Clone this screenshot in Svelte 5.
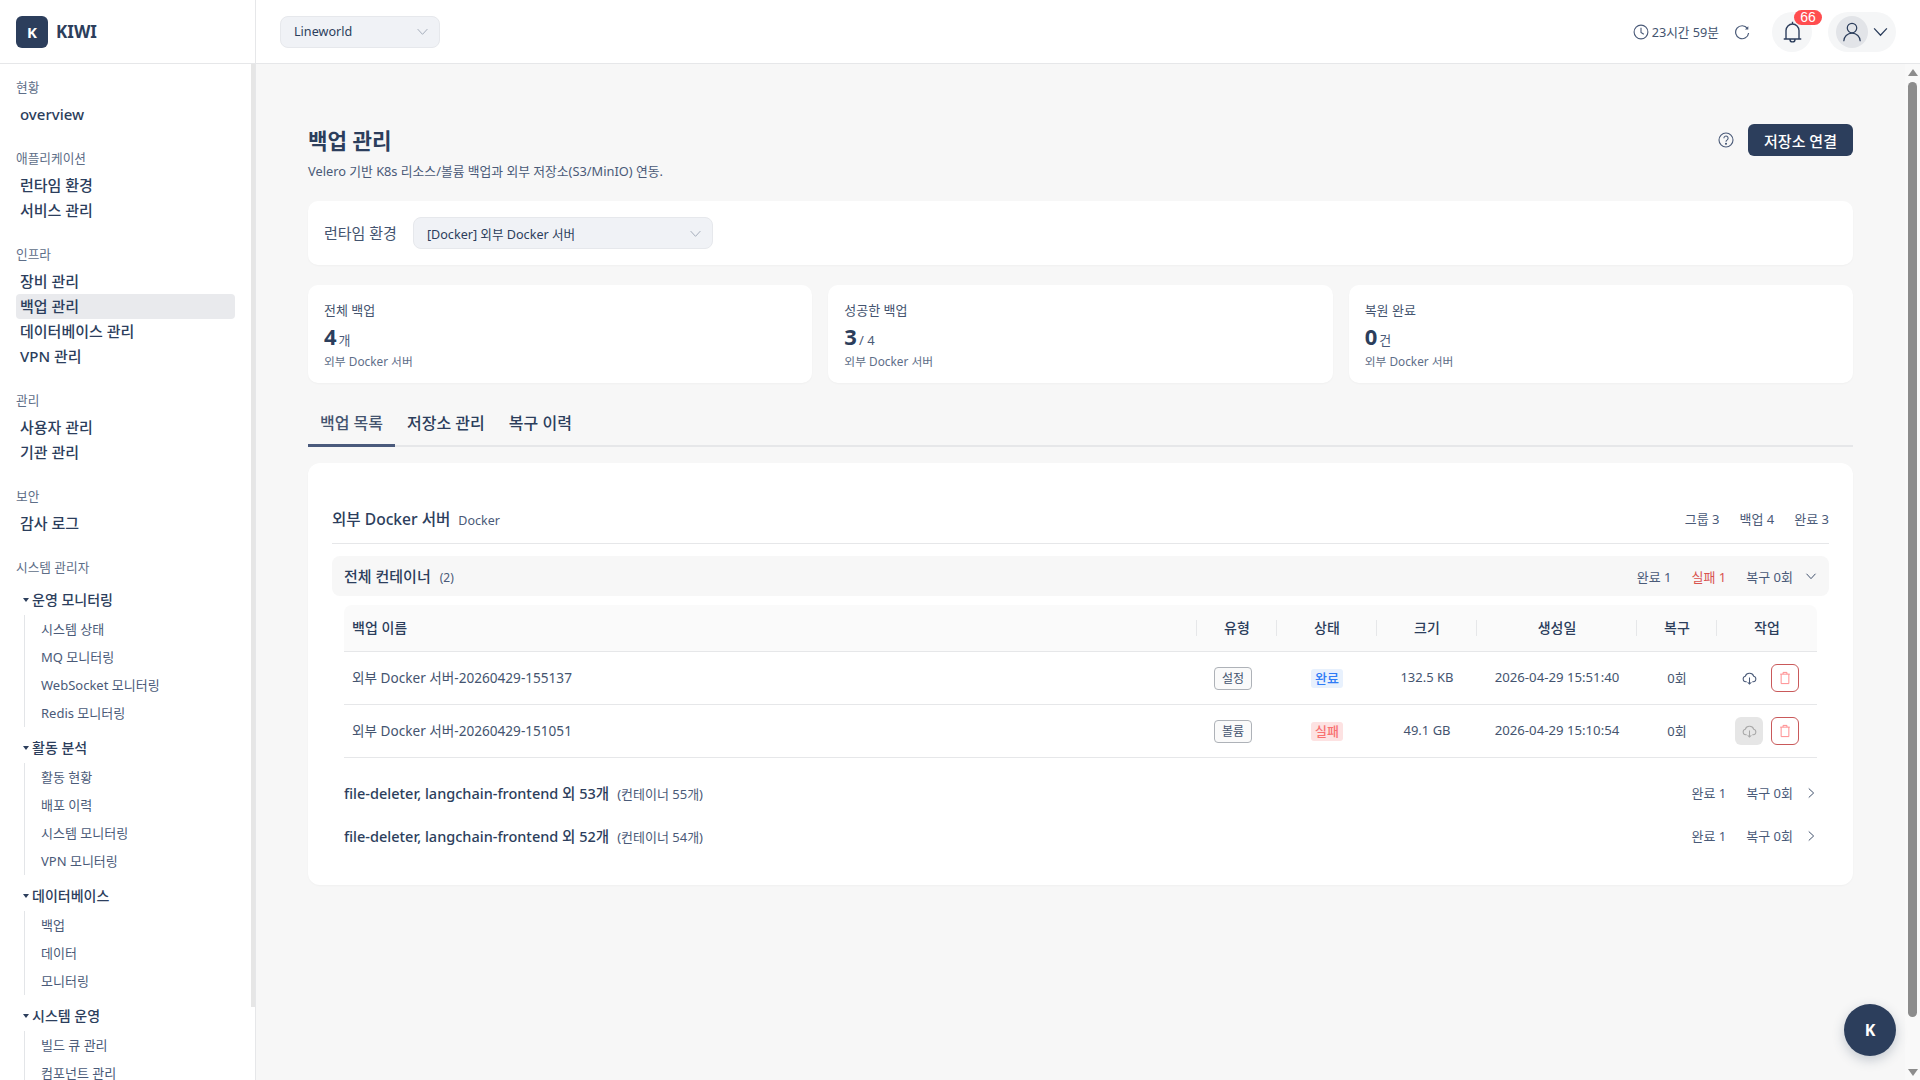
<script>
  const sections = [
    { label: '현황', items: ['overview'] },
    { label: '애플리케이션', items: ['런타임 환경', '서비스 관리'] },
    { label: '인프라', items: ['장비 관리', '백업 관리', '데이터베이스 관리', 'VPN 관리'] },
    { label: '관리', items: ['사용자 관리', '기관 관리'] },
    { label: '보안', items: ['감사 로그'] }
  ];
  const groups = [
    { title: '운영 모니터링', items: ['시스템 상태', 'MQ 모니터링', 'WebSocket 모니터링', 'Redis 모니터링'] },
    { title: '활동 분석', items: ['활동 현황', '배포 이력', '시스템 모니터링', 'VPN 모니터링'] },
    { title: '데이터베이스', items: ['백업', '데이터', '모니터링'] },
    { title: '시스템 운영', items: ['빌드 큐 관리', '컴포넌트 관리'] }
  ];
  const stats = [
    { label: '전체 백업', value: '4', unit: '개' },
    { label: '성공한 백업', value: '3', unit: '/ 4' },
    { label: '복원 완료', value: '0', unit: '건' }
  ];
  const rows = [
    { name: '외부 Docker 서버-20260429-155137', type: '설정', status: '완료', ok: true, size: '132.5 KB', date: '2026-04-29 15:51:40' },
    { name: '외부 Docker 서버-20260429-151051', type: '볼륨', status: '실패', ok: false, size: '49.1 GB', date: '2026-04-29 15:10:54' }
  ];
  const others = [
    { title: 'file-deleter, langchain-frontend 외 53개', count: '(컨테이너 55개)' },
    { title: 'file-deleter, langchain-frontend 외 52개', count: '(컨테이너 54개)' }
  ];
</script>

{#snippet chevron(cls)}
  <svg class={cls} viewBox="0 0 16 16" fill="none" stroke="currentColor" stroke-width="1.2"><path d="M2 5 8 11.5 14 5" /></svg>
{/snippet}
{#snippet cloud()}
  <svg class="ic-cloud" viewBox="0 0 16 16" fill="none" stroke="currentColor" stroke-width="1.1"><path d="M5 11.5H4a3 3 0 0 1-.5-5.9A4.6 4.6 0 0 1 8 2.5a4.6 4.6 0 0 1 4.5 3.1 3 3 0 0 1-.5 5.9h-1" /><path d="M8 7v7M6 12l2 2 2-2" /></svg>
{/snippet}
{#snippet trash()}
  <svg class="ic-trash" viewBox="0 0 16 16" fill="none" stroke="currentColor" stroke-width="1.1"><path d="M2.5 3.6h11M5.8 3.6V1.6h4.4v2M3.6 3.6v10.8h8.8V3.6" /></svg>
{/snippet}

<div class="app">
  <header class="topbar">
    <div class="brand">
      <span class="logo">K</span>
      <span class="brand-name">KIWI</span>
    </div>
    <div class="top-main">
      <div class="select org">
        <span>Lineworld</span>
        {@render chevron('chev-sel')}
      </div>
      <div class="top-right">
        <svg class="ic16 slate" viewBox="0 0 16 16" fill="none" stroke="currentColor" stroke-width="1.1"><circle cx="8" cy="8" r="6.9" /><path d="M8 3.8V8.4l2.8 1.8" /></svg>
        <span class="timer">23시간 59분</span>
        <svg class="ic16 slate refresh" viewBox="0 0 16 16" fill="none" stroke="currentColor" stroke-width="1.2"><path d="M13.4 4.4A6.5 6.5 0 1 0 14.6 9" /><path d="M14.3 2.2v3.4h-3.4z" fill="currentColor" stroke="none" /></svg>
        <div class="bell">
          <svg class="ic-bell" viewBox="0 0 20 20" fill="none" stroke="currentColor" stroke-width="1.1"><path d="M3 16h14M4.8 16V9.2a5.2 5.2 0 0 1 10.4 0V16M10 4V2.2M8 16.3a2 2 0 0 0 4 0" /></svg>
          <span class="badge">66</span>
        </div>
        <div class="user">
          <span class="avatar">
            <svg viewBox="0 0 20 20" fill="none" stroke="currentColor" stroke-width="1.1"><circle cx="10" cy="6.4" r="4.3" /><path d="M2.5 18.5a7.5 7.5 0 0 1 15 0" /></svg>
          </span>
          {@render chevron('chev-user')}
        </div>
      </div>
    </div>
  </header>

  <div class="body">
    <aside class="sidebar">
      <nav class="side-scroll">
        {#each sections as s}
          <div class="sec">
            <div class="sec-label">{s.label}</div>
            {#each s.items as item}
              <div class="nav-item" class:active={item === '백업 관리'}>{item}</div>
            {/each}
          </div>
        {/each}
        <div class="sec-label sys">시스템 관리자</div>
        {#each groups as g}
          <div class="grp">
            <div class="grp-title"><span class="tri"></span>{g.title}</div>
            <div class="grp-items">
              {#each g.items as item}
                <div class="grp-item">{item}</div>
              {/each}
            </div>
          </div>
        {/each}
      </nav>
      <div class="side-thumb"></div>
    </aside>

    <main class="main">
      <div class="content">
        <div class="page-head">
          <div>
            <h1>백업 관리</h1>
            <p>Velero 기반 K8s 리소스/볼륨 백업과 외부 저장소(S3/MinIO) 연동.</p>
          </div>
          <div class="head-actions">
            <svg class="ic16 slate" viewBox="0 0 16 16" fill="none" stroke="currentColor" stroke-width="1.1"><circle cx="8" cy="8" r="7" /><path d="M5.9 6.2a2.1 2.1 0 1 1 3.3 1.7c-.8.5-1.2 1-1.2 1.8" /><circle cx="8" cy="11.8" r=".5" fill="currentColor" /></svg>
            <button class="primary">저장소 연결</button>
          </div>
        </div>

        <section class="card runtime">
          <span class="rt-label">런타임 환경</span>
          <div class="select rt">
            <span>[Docker] 외부 Docker 서버</span>
            {@render chevron('chev-sel')}
          </div>
        </section>

        <div class="stats">
          {#each stats as st}
            <section class="card stat">
              <div class="st-label">{st.label}</div>
              <div class="st-value"><b>{st.value}</b><span>{st.unit}</span></div>
              <div class="st-sub">외부 Docker 서버</div>
            </section>
          {/each}
        </div>

        <div class="tabs">
          <div class="tab active">백업 목록</div>
          <div class="tab">저장소 관리</div>
          <div class="tab">복구 이력</div>
        </div>

        <section class="card panel">
          <div class="srv-head">
            <div class="srv-title"><strong>외부 Docker 서버</strong><span>Docker</span></div>
            <div class="meta wide"><span>그룹 3</span><span>백업 4</span><span>완료 3</span></div>
          </div>

          <div class="ctr-row open">
            <div class="ctr-title"><strong>전체 컨테이너</strong><span>(2)</span></div>
            <div class="meta">
              <span>완료 1</span><span class="fail">실패 1</span><span>복구 0회</span>
              {@render chevron('chev-row')}
            </div>
          </div>

          <table>
            <colgroup>
              <col /><col class="c80" /><col class="c100" /><col class="c100" /><col class="c160" /><col class="c80" /><col class="c100" />
            </colgroup>
            <thead>
              <tr>
                <th class="left">백업 이름</th><th>유형</th><th>상태</th><th>크기</th><th>생성일</th><th>복구</th><th>작업</th>
              </tr>
            </thead>
            <tbody>
              {#each rows as r}
                <tr>
                  <td class="left name txt">{r.name}</td>
                  <td><span class="tag">{r.type}</span></td>
                  <td><span class="status" class:ok={r.ok} class:bad={!r.ok}>{r.status}</span></td>
                  <td class="txt">{r.size}</td>
                  <td class="date txt">{r.date}</td>
                  <td class="txt">0회</td>
                  <td>
                    <div class="acts">
                      <span class="act cloud" class:disabled={!r.ok}>{@render cloud()}</span>
                      <span class="act del">{@render trash()}</span>
                    </div>
                  </td>
                </tr>
              {/each}
            </tbody>
          </table>

          <div class="others">
            {#each others as o}
              <div class="ctr-row">
                <div class="ctr-title"><strong class="med">{o.title}</strong><span class="small">{o.count}</span></div>
                <div class="meta">
                  <span>완료 1</span><span>복구 0회</span>
                  {@render chevron('chev-row side')}
                </div>
              </div>
            {/each}
          </div>
        </section>
      </div>

      <div class="scrollbar">
        <span class="arrow up"></span>
        <span class="thumb"></span>
        <span class="arrow down"></span>
      </div>
      <div class="fab">K</div>
    </main>
  </div>
</div>

<style>
  :global(body) {
    margin: 0;
    background: #fff;
  }
  .app {
    width: 1920px;
    height: 1080px;
    display: flex;
    flex-direction: column;
    overflow: hidden;
    font-family: "Noto Sans", "Noto Sans CJK KR", sans-serif;
    color: #2c3e5c;
    font-size: 13px;
  }
  .topbar {
    height: 64px;
    flex: none;
    box-sizing: border-box;
    display: flex;
    border-bottom: 1px solid #e6e7e9;
    background: #fff;
  }
  .brand {
    flex: none;
    box-sizing: border-box;
    border-right: 1px solid #e6e7e9;
    width: 256px;
    padding: 16px 16px 0;
    display: flex;
    gap: 8px;
    align-items: flex-start;
  }
  .logo {
    width: 32px;
    height: 32px;
    border-radius: 6px;
    background: #2c3e5c;
    color: #fff;
    font-weight: 700;
    font-size: 15px;
    display: flex;
    align-items: center;
    justify-content: center;
  }
  .brand-name {
    font-size: 17px;
    font-weight: 700;
    line-height: 32px;
  }
  .top-main {
    flex: 1;
    display: flex;
    align-items: center;
    justify-content: space-between;
    padding: 0 24px;
  }
  .select {
    box-sizing: border-box;
    height: 32px;
    background: #f0f2f6;
    border: 1px solid #e6e8ec;
    border-radius: 8px;
    display: flex;
    align-items: center;
    justify-content: space-between;
    padding: 0 10px 0 13px;
    font-size: 12.6px;
    color: #2c3e5c;
  }
  .select.org {
    width: 160px;
  }
  .select.rt {
    width: 300px;
  }
  .chev-sel {
    width: 13px;
    height: 13px;
    color: #a4acb9;
  }
  .top-right {
    display: flex;
    align-items: center;
  }
  .ic16 {
    width: 16px;
    height: 16px;
  }
  .slate {
    color: #4a5a78;
  }
  .timer {
    font-size: 12.7px;
    margin-left: 3px;
    color: #44546f;
  }
  .refresh {
    margin-left: 15px;
  }
  .bell {
    position: relative;
    width: 40px;
    height: 40px;
    border-radius: 50%;
    background: #f5f6f7;
    margin-left: 22px;
    display: flex;
    align-items: center;
    justify-content: center;
  }
  .ic-bell {
    width: 25px;
    height: 25px;
    color: #2c3e5c;
  }
  .badge {
    position: absolute;
    left: 22px;
    top: -2px;
    min-width: 28px;
    height: 15px;
    border-radius: 8px;
    background: #ff4d4f;
    color: #fff;
    font-size: 14px;
    line-height: 15px;
    text-align: center;
    font-family: "Liberation Sans", sans-serif;
  }
  .user {
    margin-left: 16px;
    width: 68px;
    height: 40px;
    box-sizing: border-box;
    padding-left: 8px;
    border-radius: 20px;
    background: #f5f6f7;
    display: flex;
    align-items: center;
    gap: 4px;
  }
  .avatar {
    width: 32px;
    height: 32px;
    border-radius: 50%;
    background: #e2e4e8;
    display: flex;
    align-items: center;
    justify-content: center;
  }
  .avatar svg {
    width: 22px;
    height: 22px;
    color: #2c3e5c;
  }
  .chev-user {
    width: 17px;
    height: 17px;
    color: #2c3e5c;
  }
  .body {
    flex: 1;
    display: flex;
    min-height: 0;
  }
  .sidebar {
    width: 256px;
    flex: none;
    box-sizing: border-box;
    border-right: 1px solid #e6e7e9;
    position: relative;
    overflow: hidden;
    background: #fff;
  }
  .side-thumb {
    position: absolute;
    right: 0;
    top: 0;
    width: 4px;
    height: 943px;
    background: #e6e6e6;
  }
  .side-scroll {
    padding: 15px 16px 0;
    box-sizing: border-box;
    width: 251px;
  }
  .sec {
    margin-bottom: 23px;
  }
  .sec-label {
    font-size: 12.7px;
    line-height: 16px;
    color: #5e6e88;
    margin-bottom: 7px;
  }
  .nav-item {
    height: 25px;
    line-height: 25px;
    padding-left: 4px;
    font-size: 15px;
    font-weight: 500;
    border-radius: 4px;
    color: #2c3e5c;
  }
  .nav-item.active {
    background: #e9eaed;
  }
  .sec-label.sys {
    margin-bottom: 13px;
  }
  .grp {
    margin-bottom: 9px;
  }
  .grp-title {
    height: 24px;
    line-height: 24px;
    font-size: 14px;
    font-weight: 500;
    padding-left: 7px;
    margin-bottom: 3px;
    display: flex;
    align-items: center;
    gap: 3px;
  }
  .tri {
    width: 0;
    height: 0;
    border-left: 3px solid transparent;
    border-right: 3px solid transparent;
    border-top: 4px solid #2c3e5c;
  }
  .grp-items {
    margin-left: 8px;
    border-left: 1px solid #e3e5e8;
    padding-left: 16px;
  }
  .grp-item {
    height: 28px;
    line-height: 28px;
    font-size: 13px;
    color: #4a5a78;
    white-space: nowrap;
  }
  .main {
    flex: 1;
    min-width: 0;
    background: #f7f7f7;
    position: relative;
    display: flex;
    overflow: hidden;
  }
  .content {
    flex: 1;
    min-width: 0;
    padding: 60px 52px 0;
  }
  .page-head {
    display: flex;
    justify-content: space-between;
    align-items: flex-start;
    height: 77px;
  }
  h1 {
    margin: 1px 0 0;
    font-size: 21.2px;
    font-weight: 700;
    line-height: 32px;
  }
  .page-head p {
    margin: 5px 0 0;
    font-size: 12.8px;
    line-height: 18px;
    color: #4a5a78;
  }
  .head-actions {
    display: flex;
    align-items: center;
    gap: 14px;
  }
  .primary {
    width: 105px;
    height: 32px;
    border: 0;
    border-radius: 6px;
    background: #2c3e5c;
    color: #fff;
    font: inherit;
    font-size: 15px;
    font-weight: 500;
    padding: 0;
  }
  .card {
    background: #fff;
    border-radius: 10px;
    box-shadow: 0 1px 2px rgba(0, 0, 0, 0.03);
  }
  .runtime {
    height: 64px;
    display: flex;
    align-items: center;
    padding: 0 16px;
    gap: 16px;
    box-sizing: border-box;
  }
  .rt-label {
    font-size: 15px;
    color: #44546f;
    margin-bottom: 2px;
  }
  .stats {
    display: grid;
    grid-template-columns: repeat(3, 1fr);
    gap: 16px;
    margin-top: 20px;
  }
  .stat {
    height: 98px;
    box-sizing: border-box;
    padding: 16px 16px 0;
  }
  .st-label {
    font-size: 13px;
    line-height: 18px;
    color: #44546f;
  }
  .st-value {
    line-height: 26px;
    margin-top: 4px;
    height: 26px;
  }
  .st-value b {
    font-size: 22px;
    font-weight: 700;
    margin-right: 2px;
  }
  .st-value span {
    font-size: 13px;
    color: #4a5a78;
  }
  .st-sub {
    font-size: 11.8px;
    line-height: 18px;
    color: #5e6e88;
    margin-top: 3px;
  }
  .tabs {
    display: flex;
    margin-top: 16px;
    border-bottom: 2px solid #e6e7e9;
    box-sizing: border-box;
    height: 48px;
  }
  .tab {
    padding: 0 12px;
    line-height: 48px;
    font-size: 16px;
    font-weight: 500;
    color: #2c3e5c;
    height: 48px;
    box-sizing: border-box;
  }
  .tab.active {
    border-bottom: 3px solid #4a5a7c;
    color: #44546f;
  }
  .panel {
    margin-top: 16px;
    border-radius: 12px;
    padding: 24px;
    box-sizing: border-box;
    height: 422px;
  }
  .srv-head {
    display: flex;
    justify-content: space-between;
    align-items: center;
    height: 57px;
    padding-top: 6px;
    box-sizing: border-box;
    border-bottom: 1px solid #e6e7e9;
  }
  .srv-title strong {
    font-size: 15.6px;
    font-weight: 500;
  }
  .srv-title span {
    font-size: 12.5px;
    color: #4a5a78;
    margin-left: 8px;
  }
  .meta {
    display: flex;
    align-items: center;
    gap: 20px;
    font-size: 13px;
    color: #4a5a78;
  }
  .fail {
    color: #d9534f;
  }
  .chev-row {
    width: 12px;
    height: 12px;
    color: #2c3e5c;
    margin-left: -8px;
  }
  :global(.chev-row.side) {
    transform: rotate(-90deg);
  }
  .ctr-row {
    display: flex;
    justify-content: space-between;
    align-items: center;
    box-sizing: border-box;
    padding: 0 12px;
    height: 43px;
  }
  .ctr-row.open {
    height: 40px;
    background: #f7f7f7;
    border-radius: 8px;
    margin-top: 12px;
  }
  .ctr-row.open .ctr-title {
    margin-bottom: 2px;
  }
  .ctr-title strong {
    font-size: 15px;
    font-weight: 500;
  }
  .ctr-title strong.med {
    font-size: 14.5px;
  }
  .ctr-title span {
    font-size: 12px;
    color: #4a5a78;
    margin-left: 9px;
  }
  .ctr-title span.small {
    margin-left: 8px;
    font-size: 13px;
  }
  table {
    width: calc(100% - 24px);
    margin: 9px 12px 0;
    border-collapse: separate;
    border-spacing: 0;
    table-layout: fixed;
    font-size: 13px;
  }
  .c80 { width: 80px; }
  .c100 { width: 100px; }
  .c160 { width: 160px; }
  th {
    height: 47px;
    padding: 0 0 2px;
    box-sizing: border-box;
    background: #fafafa;
    font-weight: 500;
    font-size: 14px;
    border-bottom: 1px solid #e6e7e9;
    position: relative;
    color: #2c3e5c;
  }
  th.left {
    padding-left: 8px;
  }
  th:first-child {
    border-top-left-radius: 8px;
  }
  th:last-child {
    border-top-right-radius: 8px;
  }
  th:not(:last-child)::after {
    content: "";
    position: absolute;
    right: 0;
    top: 15px;
    height: 16px;
    width: 1px;
    background: #e6e7e9;
  }
  td {
    height: 53px;
    padding: 0;
    box-sizing: border-box;
    text-align: center;
    border-bottom: 1px solid #e6e7e9;
    color: #44546f;
  }
  td.txt {
    padding-bottom: 2px;
  }
  td.name {
    font-size: 13.6px;
  }
  td.date {
    font-size: 13.2px;
  }
  .left {
    text-align: left;
    padding-left: 8px;
  }
  .tag {
    display: inline-block;
    box-sizing: border-box;
    width: 38px;
    height: 23px;
    line-height: 21px;
    border: 1px solid #aeb2b8;
    border-radius: 4px;
    font-size: 12px;
    background: #fafafa;
    margin-left: -8px;
  }
  .status {
    display: inline-block;
    width: 32px;
    height: 19px;
    line-height: 19px;
    border-radius: 3px;
    font-size: 13px;
    font-weight: 500;
  }
  .status.ok {
    background: #e8f1fd;
    color: #2f7cf6;
  }
  .status.bad {
    background: #fde2e2;
    color: #f87171;
  }
  .acts {
    display: flex;
    justify-content: center;
    gap: 8px;
  }
  .act {
    width: 28px;
    height: 28px;
    box-sizing: border-box;
    border-radius: 6px;
    display: flex;
    align-items: center;
    justify-content: center;
  }
  .act.cloud {
    color: #4a5a78;
  }
  .act.cloud.disabled {
    background: #e6e6e6;
    color: #a8a8a8;
  }
  .act.del {
    border: 1px solid #c9595a;
    color: #ff8a8c;
  }
  .ic-cloud {
    width: 15px;
    height: 15px;
  }
  .ic-trash {
    width: 14px;
    height: 14px;
  }
  .others {
    margin-top: 13px;
  }
  .scrollbar {
    width: 15px;
    flex: none;
    background: #f9f9f9;
    display: flex;
    flex-direction: column;
    align-items: center;
    padding: 5px 0 4px;
    box-sizing: border-box;
  }
  .thumb {
    width: 9px;
    height: 935px;
    background: #8c8c8c;
    border-radius: 5px;
    margin-top: 6px;
    margin-bottom: auto;
  }
  .arrow {
    width: 0;
    height: 0;
    border-left: 5px solid transparent;
    border-right: 5px solid transparent;
  }
  .arrow.up {
    border-bottom: 7px solid #8c8c8c;
  }
  .arrow.down {
    border-top: 7px solid #8c8c8c;
  }
  .fab {
    position: absolute;
    right: 24px;
    bottom: 24px;
    width: 52px;
    height: 52px;
    border-radius: 50%;
    background: #2c3e5c;
    color: #fff;
    font-weight: 700;
    font-size: 16px;
    display: flex;
    align-items: center;
    justify-content: center;
    box-shadow: 0 4px 12px rgba(44, 62, 92, 0.25);
  }
</style>
